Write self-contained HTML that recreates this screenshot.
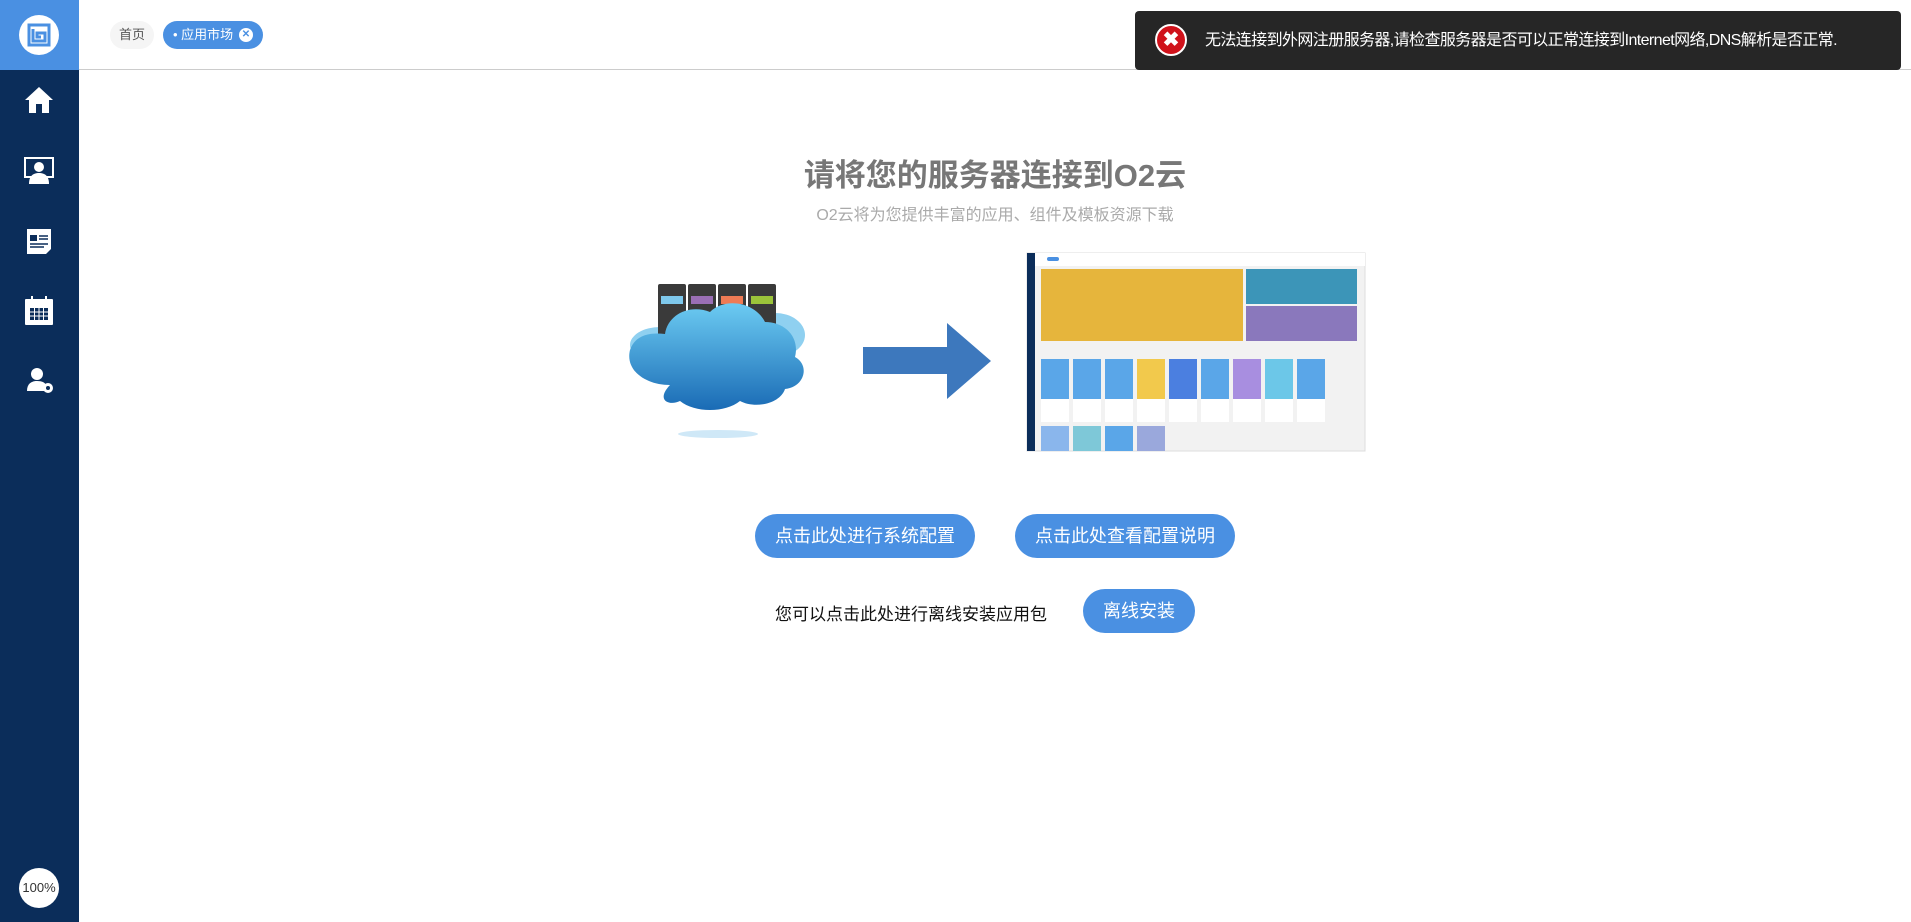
<!DOCTYPE html>
<html><head><meta charset="utf-8"><style>
*{margin:0;padding:0;box-sizing:border-box}
body{width:1911px;height:922px;position:relative;overflow:hidden;background:#fff;font-family:"Liberation Sans","Noto Sans CJK SC",sans-serif}
.side{position:absolute;left:0;top:0;width:79px;height:922px;background:#0b2d5a}
.logo{position:absolute;left:0;top:0;width:79px;height:70px;background:#4a90e2}
.top{position:absolute;left:79px;top:0;right:0;height:70px;border-bottom:1px solid #ccc}
.abs{position:absolute}
.btn{position:absolute;background:#4a90e2;color:#fff;border-radius:22px;text-align:center;font-size:18px}
</style></head><body>
<div class="side">
 <div class="logo">
  <div class="abs" style="left:19px;top:15px;width:40px;height:40px;border-radius:50%;background:#fff"></div>
  <svg class="abs" style="left:27px;top:23px" width="24" height="24" viewBox="0 0 24 24"><path d="M2 2h20v20H2zM6 6v12h12V10h-8v4h4" fill="none" stroke="#4a90e2" stroke-width="3"/></svg>
 </div>
 <svg class="abs" style="left:24px;top:86px" width="30" height="28" viewBox="0 0 30 28"><path d="M15 1L1 14h4v13h7v-9h6v9h7V14h4z" fill="#fff"/></svg>
 <svg class="abs" style="left:24px;top:157px" width="30" height="28" viewBox="0 0 30 28"><rect x="1" y="1" width="28" height="19" fill="none" stroke="#fff" stroke-width="2"/><circle cx="15" cy="10" r="5" fill="#fff"/><path d="M5 27c0-8 4-11 10-11s10 3 10 11z" fill="#fff"/></svg>
 <svg class="abs" style="left:26px;top:227px" width="26" height="28" viewBox="0 0 26 28"><path d="M1 2h24v20l-5 5H1z" fill="#fff"/><rect x="4" y="8" width="7" height="6" fill="#0b2d5a"/><path d="M13 9h9M13 12h9M4 17h18M4 20h14" stroke="#0b2d5a" stroke-width="1.5"/></svg>
 <svg class="abs" style="left:25px;top:296px" width="28" height="30" viewBox="0 0 28 30"><rect x="0" y="3" width="28" height="26" rx="1" fill="#fff"/><rect x="6" y="0" width="2" height="6" fill="#fff"/><rect x="20" y="0" width="2" height="6" fill="#fff"/><g fill="#0b2d5a"><rect x="5" y="12" width="18" height="12"/></g><path d="M5 16h18M5 20h18M9.5 12v12M14 12v12M18.5 12v12" stroke="#fff" stroke-width="1"/></svg>
 <svg class="abs" style="left:27px;top:367px" width="28" height="28" viewBox="0 0 28 28"><circle cx="10" cy="7" r="6" fill="#fff"/><path d="M0 24c0-7 4-10 10-10s8 2 9 4v6z" fill="#fff"/><circle cx="21" cy="21" r="5" fill="#fff"/><circle cx="21" cy="21" r="2" fill="#0b2d5a"/></svg>
 <div class="abs" style="left:19px;top:868px;width:40px;height:40px;border-radius:50%;background:#fff;font-size:13px;line-height:40px;text-align:center;color:#333">100%</div>
</div>
<div class="top">
 <div class="abs" style="left:31px;top:21px;width:44px;height:28px;border-radius:14px;background:#f5f5f5;font-size:13px;line-height:28px;text-align:center;color:#555">首页</div>
 <div class="abs" style="left:84px;top:21px;width:100px;height:28px;border-radius:14px;background:#4a90e2;font-size:13px;line-height:28px;color:#fff;padding-left:10px">• 应用市场</div>
 <div class="abs" style="left:160px;top:28px;width:14px;height:14px;border-radius:50%;background:#fff;color:#4a90e2;font-size:10px;line-height:14px;text-align:center;font-weight:bold">✕</div>
</div>
<div class="abs" style="left:1135px;top:11px;width:766px;height:59px;border-radius:4px;background:#262626;color:#fff;font-size:16px;letter-spacing:-0.6px;line-height:59px;padding-left:70px;white-space:nowrap">无法连接到外网注册服务器,请检查服务器是否可以正常连接到Internet网络,DNS解析是否正常.
 <div class="abs" style="left:20px;top:13px;width:32px;height:32px;border-radius:50%;background:#d0121b;border:2px solid #fff;color:#fff;font-size:20px;line-height:28px;text-align:center;font-weight:bold;letter-spacing:0">✖</div>
</div>
<div class="abs" style="left:79px;right:0;top:150px;text-align:center;font-size:31px;font-weight:bold;color:#777">请将您的服务器连接到O2云</div>
<div class="abs" style="left:79px;right:0;top:201px;text-align:center;font-size:16px;color:#aaa">O2云将为您提供丰富的应用、组件及模板资源下载</div>
<svg class="abs" style="left:0;top:0" width="1911" height="922">
 <defs><linearGradient id="cg" x1="0" y1="0" x2="0" y2="1"><stop offset="0" stop-color="#6ccbf2"/><stop offset="1" stop-color="#1a6bb5"/></linearGradient></defs>
 <ellipse cx="660" cy="345" rx="30" ry="18" fill="#8fd0f0"/><ellipse cx="775" cy="335" rx="30" ry="22" fill="#8fd0f0"/>
 <g fill="#3a3a3a"><rect x="658" y="284" width="28" height="85" rx="2"/><rect x="688" y="284" width="28" height="85" rx="2"/><rect x="718" y="284" width="28" height="85" rx="2"/><rect x="748" y="284" width="28" height="85" rx="2"/></g>
 <rect x="661" y="296" width="22" height="8" fill="#7ec8ec"/><rect x="691" y="296" width="22" height="8" fill="#9a6fb5"/><rect x="721" y="296" width="22" height="8" fill="#ee7b55"/><rect x="751" y="296" width="22" height="8" fill="#9bc43a"/>
 <path d="M670 385c-25 0-45-15-40-35c5-15 20-18 35-16c3-20 25-30 45-22c15-15 45-10 55 10c20 0 35 15 30 35c15 8 10 30-10 32c-5 15-30 20-45 12c-15 12-45 12-60 0c-10 5-25 0-10-16z" fill="url(#cg)"/>
 <ellipse cx="718" cy="434" rx="40" ry="4" fill="#cfe8f7"/>
 <path d="M863 347H947V323L991 361L947 399V374H863z" fill="#3d78bd"/>
 <rect x="1027" y="253" width="338" height="198" fill="#f2f2f2" stroke="#ddd"/>
 <rect x="1027" y="253" width="8" height="198" fill="#0b2d5a"/>
 <rect x="1035" y="253" width="330" height="13" fill="#fff"/>
 <rect x="1047" y="257" width="12" height="4" rx="2" fill="#4a90e2"/>
 <rect x="1041" y="269" width="202" height="72" fill="#e6b53c"/>
 <rect x="1246" y="269" width="111" height="35" fill="#3c95b8"/>
 <rect x="1246" y="306" width="111" height="35" fill="#8a78bc"/>
 <g fill="#5aa6e8">
  <rect x="1041" y="359" width="28" height="40"/><rect x="1073" y="359" width="28" height="40"/><rect x="1105" y="359" width="28" height="40"/><rect x="1137" y="359" width="28" height="40" fill="#f2c94c"/><rect x="1169" y="359" width="28" height="40" fill="#4b7fe0"/><rect x="1201" y="359" width="28" height="40"/><rect x="1233" y="359" width="28" height="40" fill="#a88ee0"/><rect x="1265" y="359" width="28" height="40" fill="#6cc7e8"/><rect x="1297" y="359" width="28" height="40"/>
  <rect x="1041" y="426" width="28" height="25" fill="#8ab6ec"/><rect x="1073" y="426" width="28" height="25" fill="#7ec8d8"/><rect x="1105" y="426" width="28" height="25"/><rect x="1137" y="426" width="28" height="25" fill="#9aa8dc"/>
 </g>
 <g fill="#fff"><rect x="1041" y="399" width="28" height="23"/><rect x="1073" y="399" width="28" height="23"/><rect x="1105" y="399" width="28" height="23"/><rect x="1137" y="399" width="28" height="23"/><rect x="1169" y="399" width="28" height="23"/><rect x="1201" y="399" width="28" height="23"/><rect x="1233" y="399" width="28" height="23"/><rect x="1265" y="399" width="28" height="23"/><rect x="1297" y="399" width="28" height="23"/></g>
</svg>
<div class="btn" style="left:755px;top:514px;width:220px;height:44px;line-height:44px">点击此处进行系统配置</div>
<div class="btn" style="left:1015px;top:514px;width:220px;height:44px;line-height:44px">点击此处查看配置说明</div>
<div class="abs" style="left:775px;top:600px;font-size:17px;color:#111">您可以点击此处进行离线安装应用包</div>
<div class="btn" style="left:1083px;top:589px;width:112px;height:44px;line-height:44px">离线安装</div>
</body></html>
